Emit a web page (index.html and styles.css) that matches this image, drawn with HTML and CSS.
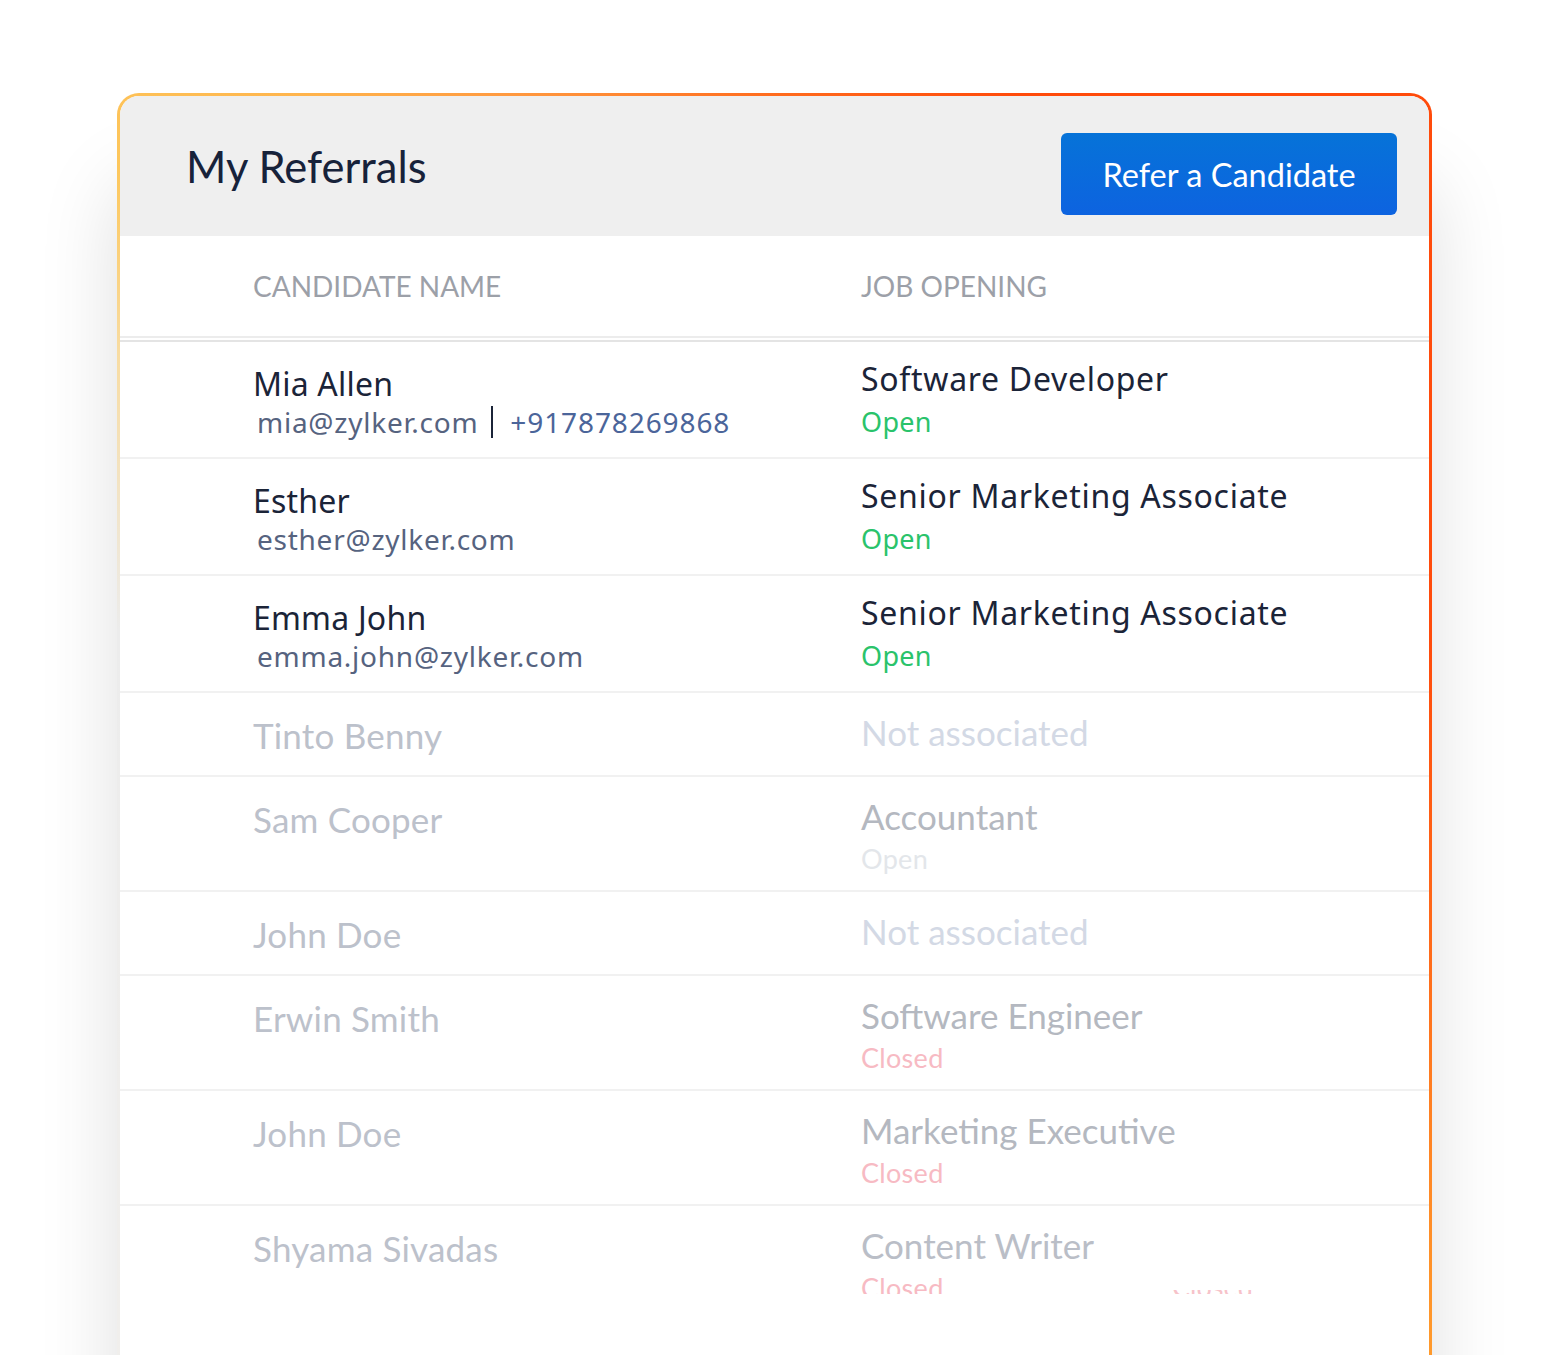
FILE: index.html
```html
<!DOCTYPE html>
<html lang="en">
<head>
<meta charset="utf-8">
<title>My Referrals</title>
<link rel="stylesheet" href="styles.css">
</head>
<body>
<div class="stage">
  <div class="card">
    <div class="card-head">
      <h1 class="title">My Referrals</h1>
      <button class="btn">Refer a Candidate</button>
    </div>
    <div class="thead">
      <div class="col-name">CANDIDATE NAME</div>
      <div class="col-job">JOB OPENING</div>
    </div>
    <div class="tbody">
      <div class="row tall">
        <div class="col-name">
          <div class="name">Mia Allen</div>
          <div class="contact"><span class="email">mia@zylker.com</span><span class="sep"></span><span class="phone">+917878269868</span></div>
        </div>
        <div class="col-job">
          <div class="job">Software Developer</div>
          <div class="status open">Open</div>
        </div>
      </div>
      <div class="row tall">
        <div class="col-name">
          <div class="name">Esther</div>
          <div class="contact"><span class="email">esther@zylker.com</span></div>
        </div>
        <div class="col-job">
          <div class="job">Senior Marketing Associate</div>
          <div class="status open">Open</div>
        </div>
      </div>
      <div class="row tall">
        <div class="col-name">
          <div class="name">Emma John</div>
          <div class="contact"><span class="email">emma.john@zylker.com</span></div>
        </div>
        <div class="col-job">
          <div class="job">Senior Marketing Associate</div>
          <div class="status open">Open</div>
        </div>
      </div>
      <div class="row short faded">
        <div class="col-name"><div class="name">Tinto Benny</div></div>
        <div class="col-job"><div class="job na">Not associated</div></div>
      </div>
      <div class="row mid faded">
        <div class="col-name"><div class="name">Sam Cooper</div></div>
        <div class="col-job">
          <div class="job">Accountant</div>
          <div class="status open-faded">Open</div>
        </div>
      </div>
      <div class="row short faded">
        <div class="col-name"><div class="name">John Doe</div></div>
        <div class="col-job"><div class="job na">Not associated</div></div>
      </div>
      <div class="row mid faded">
        <div class="col-name"><div class="name">Erwin Smith</div></div>
        <div class="col-job">
          <div class="job">Software Engineer</div>
          <div class="status closed">Closed</div>
        </div>
      </div>
      <div class="row mid faded">
        <div class="col-name"><div class="name">John Doe</div></div>
        <div class="col-job">
          <div class="job">Marketing Executive</div>
          <div class="status closed">Closed</div>
        </div>
      </div>
      <div class="row mid faded last">
        <div class="col-name"><div class="name">Shyama Sivadas</div></div>
        <div class="col-job">
          <div class="job">Content Writer</div>
          <div class="status closed">Closed</div>
        </div>
        <div class="ghost"><span class="ghost-text">Closed</span></div>
      </div>
    </div>
  </div>
</div>
</body>
</html>
```

FILE: styles.css
```css
* { box-sizing: border-box; }

html, body {
  margin: 0;
  padding: 0;
  background: #ffffff;
  height: 1355px;
  overflow: hidden;
}

body {
  font-family: Lato, "Open Sans", "Liberation Sans", sans-serif;
  color: #1b2438;
}

.stage {
  padding: 93px 0 0 117px;
}

.card {
  width: 1315px;
  height: 1420px;
  border: 3px solid transparent;
  border-radius: 22px;
  background:
    linear-gradient(#ffffff, #ffffff) padding-box,
    conic-gradient(from 0deg at 50% 607px,
      #ff6c1e 0deg,
      #ff4b0b 22deg,
      #ff4b0b 85deg,
      #ff6c1a 112deg,
      #ff9a2c 135deg,
      #ffb040 165deg,
      #f1efec 215deg,
      #ececec 276deg,
      #f8dca2 298deg,
      #fdc75c 309deg,
      #ffb44c 322deg,
      #ff9a40 336deg,
      #ff6c1e 360deg) border-box;
  box-shadow: 0 90px 80px rgba(0, 0, 0, 0.13);
  display: flex;
  flex-direction: column;
}

.card-head {
  height: 140px;
  background: #efefef;
  border-radius: 19px 19px 0 0;
  display: flex;
  justify-content: space-between;
  align-items: flex-start;
  padding: 0 32px 0 66px;
}

.title {
  margin: 0;
  padding-top: 44px;
  font-size: 43.5px;
  font-weight: 400;
  line-height: 1.2;
  color: #17223a;
}

.btn {
  margin-top: 37px;
  width: 336px;
  height: 82px;
  border: none;
  border-radius: 6px;
  background: linear-gradient(180deg, #0673d8 0%, #0d63e0 100%);
  color: #ffffff;
  font-family: inherit;
  font-size: 32.5px;
  font-weight: 400;
  padding: 0;
}

.thead {
  height: 102px;
  display: flex;
  align-items: center;
  padding-left: 133px;
  border-bottom: 2px solid #ececec;
  font-size: 28px;
  color: #9ca0a8;
}

.col-name {
  width: 608px;
  flex: none;
}

.col-job {
  flex: 1;
}

.tbody {
  margin-top: 2px;
  border-top: 2px solid #e4e4e4;
  height: 954px;
  overflow: hidden;
}

.row {
  position: relative;
  display: flex;
  padding-left: 133px;
  border-bottom: 2px solid #f1f1f1;
}

.row.tall { height: 117px; }
.row.short { height: 84px; }
.row.mid { height: 115px; }

.row.tall .col-name { padding-top: 23px; }
.row.tall .col-job { padding-top: 18px; }

.tall {
  font-family: "Noto Sans", "Open Sans", sans-serif;
}

.name {
  font-size: 32px;
  line-height: 37px;
  letter-spacing: 0.2px;
  color: #1b2438;
}

.contact {
  margin-top: 3px;
  padding-left: 4px;
  font-size: 28px;
  line-height: 34px;
  letter-spacing: 0.75px;
  display: flex;
  align-items: center;
}

.email { color: #56637f; }

.sep {
  width: 2px;
  height: 32px;
  background: #1b2438;
  margin: 0 17px 0 13px;
}

.phone { color: #4b659a; letter-spacing: 0.9px; }

.job {
  font-size: 32px;
  line-height: 37px;
  letter-spacing: 0.7px;
  color: #1b2438;
}

.status {
  margin-top: 9px;
  font-size: 27px;
  line-height: 32px;
  letter-spacing: 0.3px;
}

.open { color: #2ac36b; }

/* faded rows */
.faded .name {
  font-size: 35px;
  line-height: 42px;
  color: #bcc1cb;
}

.faded .col-name { padding-top: 21px; }
.faded .col-job { padding-top: 18px; }

.faded .job {
  font-size: 35px;
  line-height: 42px;
  letter-spacing: 0;
  color: #b4b8c0;
}

.faded .job.na { color: #d3d9e5; }

.faded .status { margin-top: 6px; }

.open-faded { color: #e3e6ea; }
.closed { color: #f7bac3; }

.last .job { color: #babec7; }

.ghost {
  position: absolute;
  left: 1052px;
  top: 84px;
  height: 7px;
  overflow: hidden;
}

.ghost-text {
  display: block;
  margin-top: -17px;
  font-size: 27px;
  line-height: 27px;
  color: #f7c3ca;
}
```
